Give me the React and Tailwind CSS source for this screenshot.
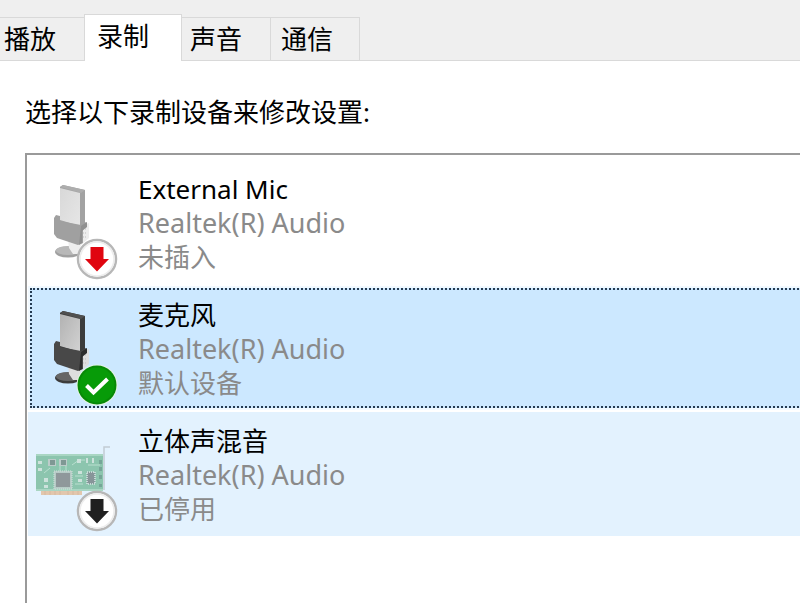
const tabs = [
  { label: '播放', className: 'h-[43px] w-[85px] pl-1 border-t border-r bg-[#efefef]' },
  { label: '录制', selected: true, className: 'relative z-10 -mb-px h-[47px] w-[98px] -ml-px pl-3 border-x border-t bg-white pb-1' },
  { label: '声音', className: 'h-[43px] w-[89px] pl-2 border-t border-r bg-[#efefef]' },
  { label: '通信', className: 'h-[43px] w-[89px] pl-[10px] border-t border-r bg-[#efefef]' },
];

function Microphone({ faded }) {
  const c = faded
    ? { side: '#a2a2a2', top: '#adadad', face: '#d8d8d8', faceEnd: '#e6e6e6', band: '#a0a0a0', bandSide: '#909090', base: '#b8b8b8', rim: '#a0a0a0', stem: '#ededed' }
    : { side: '#3c3c3c', top: '#505050', face: '#b2b2b2', faceEnd: '#d2d2d2', band: '#484848', bandSide: '#2c2c2c', base: '#666666', rim: '#3c3c3c', stem: '#dedede' };
  const id = faded ? 'mic-faded' : 'mic-face';
  return (
    <svg viewBox="0 0 84 100" className="h-[100px] w-[84px]" aria-hidden="true">
      <defs>
        <linearGradient id={id} x1="0" y1="0" x2="1" y2="1">
          <stop offset="0" stopColor={c.face} />
          <stop offset="1" stopColor={c.faceEnd} />
        </linearGradient>
      </defs>
      <ellipse cx="34" cy="80" rx="13" ry="5.5" fill={c.rim} />
      <ellipse cx="34" cy="78.5" rx="12" ry="4.5" fill={c.base} />
      <path d="M34 67l14 3-2 6c4 1 6 3 6 6H39l-4-6z" fill={c.stem} />
      <path d="M47 54l8-3v15l-8 7z" fill={c.stem} />
      <path d="M49 57h4M49 61h4M49 65h4" stroke="#bdbdbd" strokeDasharray="1 1" />
      <path d="M26 15l3-2 22 5v33l-4 5-21-6z" fill={c.side} />
      <path d="M26 15l3-2 22 5-4 3z" fill={c.top} />
      <path d="M26 16l20 5v33l-20-6z" fill={`url(#${id})`} />
      <path d="M20 46l2-3 4 1v5l21 4 5-3 1 2-4 5v14l-5 2-21-7-3-4z" fill={c.band} />
      <path d="M47 54l6-4v5l-5 4v12l-3 2z" fill={c.bandSide} />
    </svg>
  );
}

function SoundCard() {
  return (
    <svg viewBox="4 0 84 100" className="h-[100px] w-[84px]" aria-hidden="true">
      <path d="M11 66h41v5H11z" fill="#e2c7ad" />
      <path d="M15 66v5M20 66v5M25 66v5M30 66v5M38 66v5M43 66v5M48 66v5" stroke="#d6b9a0" />
      <path d="M6 31h67v35H6z" fill="#8cc5ae" />
      <path d="M6 31h67M6 66h67" stroke="#a9d6c3" strokeWidth="2" />
      <path d="M74 66V23h6" fill="none" stroke="#c2ccd3" strokeWidth="1.5" />
      <path d="M42 41l7-5h6M45 52h8M20 44l-6 5M45 60h8M58 41h12M36 42v5M30 42v5" fill="none" stroke="#b9dfcf" />
      <path d="M24 47h18v18H24z" fill="#b6cbc6" stroke="#d1e1dc" strokeDasharray="1 1" />
      <path d="M26 49h14v14H26z" fill="#8f989b" />
      <path d="M57 48h8v12h-8z" fill="#879599" stroke="#c5d8d5" strokeWidth="2" strokeDasharray="1 1" />
      <path d="M18 35h8v7h-8zM29 35h8v7h-8z" fill="#bdccca" />
      <path d="M20 36h5v5h-5zM31 36h5v5h-5z" fill="#7f9894" />
      <path d="M8 37h4v3H8zM8 44h4v3H8zM14 54h4v4h-4zM14 61h4v3h-4zM47 35h4v4h-4zM48 47h4v3h-4zM48 55h4v3h-4zM56 34h2v5h-2zM62 34h2v5h-2z" fill="#cde2dc" />
      <path d="M69 36h3v4h-3zM69 43h3v4h-3zM69 51h3v4h-3zM69 60h3v3h-3z" fill="#76a698" />
    </svg>
  );
}

function StatusBadge({ status }) {
  if (status === 'default') {
    return (
      <svg viewBox="0 0 42 42" className="absolute bottom-0 right-0 h-[42px] w-[42px]" aria-hidden="true">
        <circle cx="21" cy="21" r="20.5" fill="#e5f4e5" />
        <circle cx="21" cy="21" r="19.5" fill="#078907" />
        <circle cx="21" cy="21" r="17.5" fill="#079b08" />
        <path d="M10.5 21.5l7 7L31.5 15" fill="none" stroke="#fff" strokeWidth="4" />
      </svg>
    );
  }
  return (
    <svg viewBox="0 0 42 42" className="absolute bottom-0 right-0 h-[42px] w-[42px]" aria-hidden="true">
      <circle cx="21" cy="21" r="19" fill="#fff" stroke="#b7b7b7" strokeWidth="2.5" />
      <circle cx="21" cy="21" r="17" fill="none" stroke="#ededed" strokeWidth="1.5" />
      <path d="M14.5 9h13v12H33L21 33.5 9 21h5.5z" fill={status === 'unplugged' ? '#e0050f' : '#202020'} />
    </svg>
  );
}

const devices = [
  { name: 'External Mic', state: '未插入', status: 'unplugged', icon: <Microphone faded />, row: '', button: 'border-transparent' },
  { name: '麦克风', state: '默认设备', status: 'default', icon: <Microphone />, row: '-mr-1 bg-[#f1f9ff]', button: 'border-dotted border-[#253a50] bg-[#cce8ff]' },
  { name: '立体声混音', state: '已停用', status: 'disabled', icon: <SoundCard />, row: 'bg-[#e3f2fe]', button: 'border-transparent' },
];

export default function App() {
  return (
    <div className="flex min-h-screen flex-col overflow-hidden bg-white font-['Noto_Sans','Noto_Sans_CJK_SC',sans-serif] text-[26px] leading-[34px] text-black">
      <div role="tablist" className="flex items-end border-b border-[#d9d9d9] bg-[#efefef] pt-[14px]">
        {tabs.map((tab) => (
          <button key={tab.label} type="button" role="tab" aria-selected={!!tab.selected} className={`flex items-center border-[#d9d9d9] ${tab.className}`}>
            {tab.label}
          </button>
        ))}
      </div>
      <main role="tabpanel" className="flex grow flex-col pl-[25px] pt-[34px]">
        <h1>选择以下录制设备来修改设置:</h1>
        <ul className="mt-6 flex grow flex-col gap-0.5 border-l-2 border-t-2 border-[#9a9a9a] pl-px pt-[5px]">
          {devices.map((device) => (
            <li key={device.name} className={`p-0.5 ${device.row}`}>
              <button type="button" className={`flex h-[120px] w-full items-start border-2 pl-0.5 pt-2 text-left ${device.button}`}>
                <span className="relative mr-5 block h-[108px] w-[84px] shrink-0">
                  {device.icon}
                  <StatusBadge status={device.status} />
                </span>
                <span className="flex flex-col">
                  <span>{device.name}</span>
                  <span className="text-[27px] text-[#8a8a8a]">Realtek(R) Audio</span>
                  <span className="text-[#8a8a8a]">{device.state}</span>
                </span>
              </button>
            </li>
          ))}
        </ul>
      </main>
    </div>
  );
}
